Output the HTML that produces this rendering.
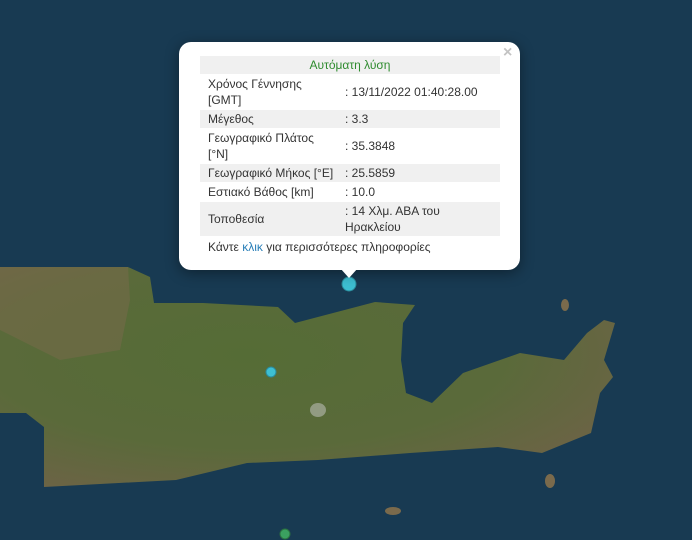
<!DOCTYPE html>
<html><head><meta charset="utf-8"><style>
body{margin:0;width:692px;height:540px;overflow:hidden;position:relative;background:#183a52;font-family:"Liberation Sans","DejaVu Sans",sans-serif;}
svg{position:absolute;left:0;top:0}
.pop{position:absolute;left:179px;top:42px;width:341px;height:228px;background:#fff;border-radius:12px;box-shadow:0 3px 14px rgba(0,0,0,.4);}
.tip{position:absolute;left:340px;top:268px;width:0;height:0;border-left:9px solid transparent;border-right:9px solid transparent;border-top:10px solid #fff;}
.x{position:absolute;left:503px;top:44px;color:#c3c3c3;font:bold 16px "Liberation Sans",sans-serif;}
table{position:absolute;left:200px;top:55px;width:300px;border-collapse:separate;border-spacing:0 1px;font-size:12px;color:#333;line-height:16px}
td{padding:1px 8px;vertical-align:middle}
tr.g td{background:#f0f0f0}
td.v{padding-left:0;width:147px}
.lk{position:absolute;left:208px;top:240px;font-size:12px;color:#333}
</style></head><body>
<svg width="692" height="540">
<defs><radialGradient id="l" cx="40%" cy="40%" r="70%"><stop offset="0" stop-color="#556c36"/><stop offset="0.6" stop-color="#5a6a3a"/><stop offset="1" stop-color="#6d6346"/></radialGradient></defs>
<polygon fill="url(#l)" points="0,267 66,267 128,267 150,277 154,303 203,303 278,307 295,323 375,302 415,305 403,323 401,360 406,393 432,403 463,373 520,353 564,360 587,333 604,320 615,323 604,360 613,377 600,393 591,433 542,453 498,447 410,453 318,460 247,463 176,480 44,487 44,427 26,413 0,413"/>
<polygon fill="#7a6a4c" opacity=".5" points="0,267 66,267 128,267 130,300 120,350 60,360 0,330"/>
<ellipse cx="318" cy="410" rx="8" ry="7" fill="#ccc" opacity=".5"/>
<ellipse cx="565" cy="305" rx="4" ry="6" fill="#7a6a4c"/>
<ellipse cx="550" cy="481" rx="5" ry="7" fill="#7a6a4c"/>
<ellipse cx="393" cy="511" rx="8" ry="4" fill="#7a6a4c"/>
<circle cx="349" cy="284" r="7" fill="#3dbfd2" stroke="#2a8a9a"/>
<circle cx="271" cy="372" r="5" fill="#3dbfd2" stroke="#2a8a9a"/>
<circle cx="285" cy="534" r="5" fill="#3ba060" stroke="#2a7040"/>
</svg>
<div class="pop"></div><div class="tip"></div><div class="x">×</div>
<table>
<tr class="g"><td colspan="2" style="text-align:center;color:#2e8b2e;height:16px">Αυτόματη λύση</td></tr>
<tr><td style="height:32px">Χρόνος Γέννησης<br>[GMT]</td><td class="v">: 13/11/2022 01:40:28.00</td></tr>
<tr class="g"><td style="height:16px">Μέγεθος</td><td class="v">: 3.3</td></tr>
<tr><td style="height:30px">Γεωγραφικό Πλάτος<br>[°N]</td><td class="v">: 35.3848</td></tr>
<tr class="g"><td style="height:16px">Γεωγραφικό Μήκος [°E]</td><td class="v">: 25.5859</td></tr>
<tr><td style="height:16px">Εστιακό Βάθος [km]</td><td class="v">: 10.0</td></tr>
<tr class="g"><td style="height:32px">Τοποθεσία</td><td class="v">: 14 Χλμ. ΑΒΑ του<br>Ηρακλείου</td></tr>
</table>
<div class="lk">Κάντε <span style="color:#2a7fb8">κλικ</span> για περισσότερες πληροφορίες</div>
</body></html>
